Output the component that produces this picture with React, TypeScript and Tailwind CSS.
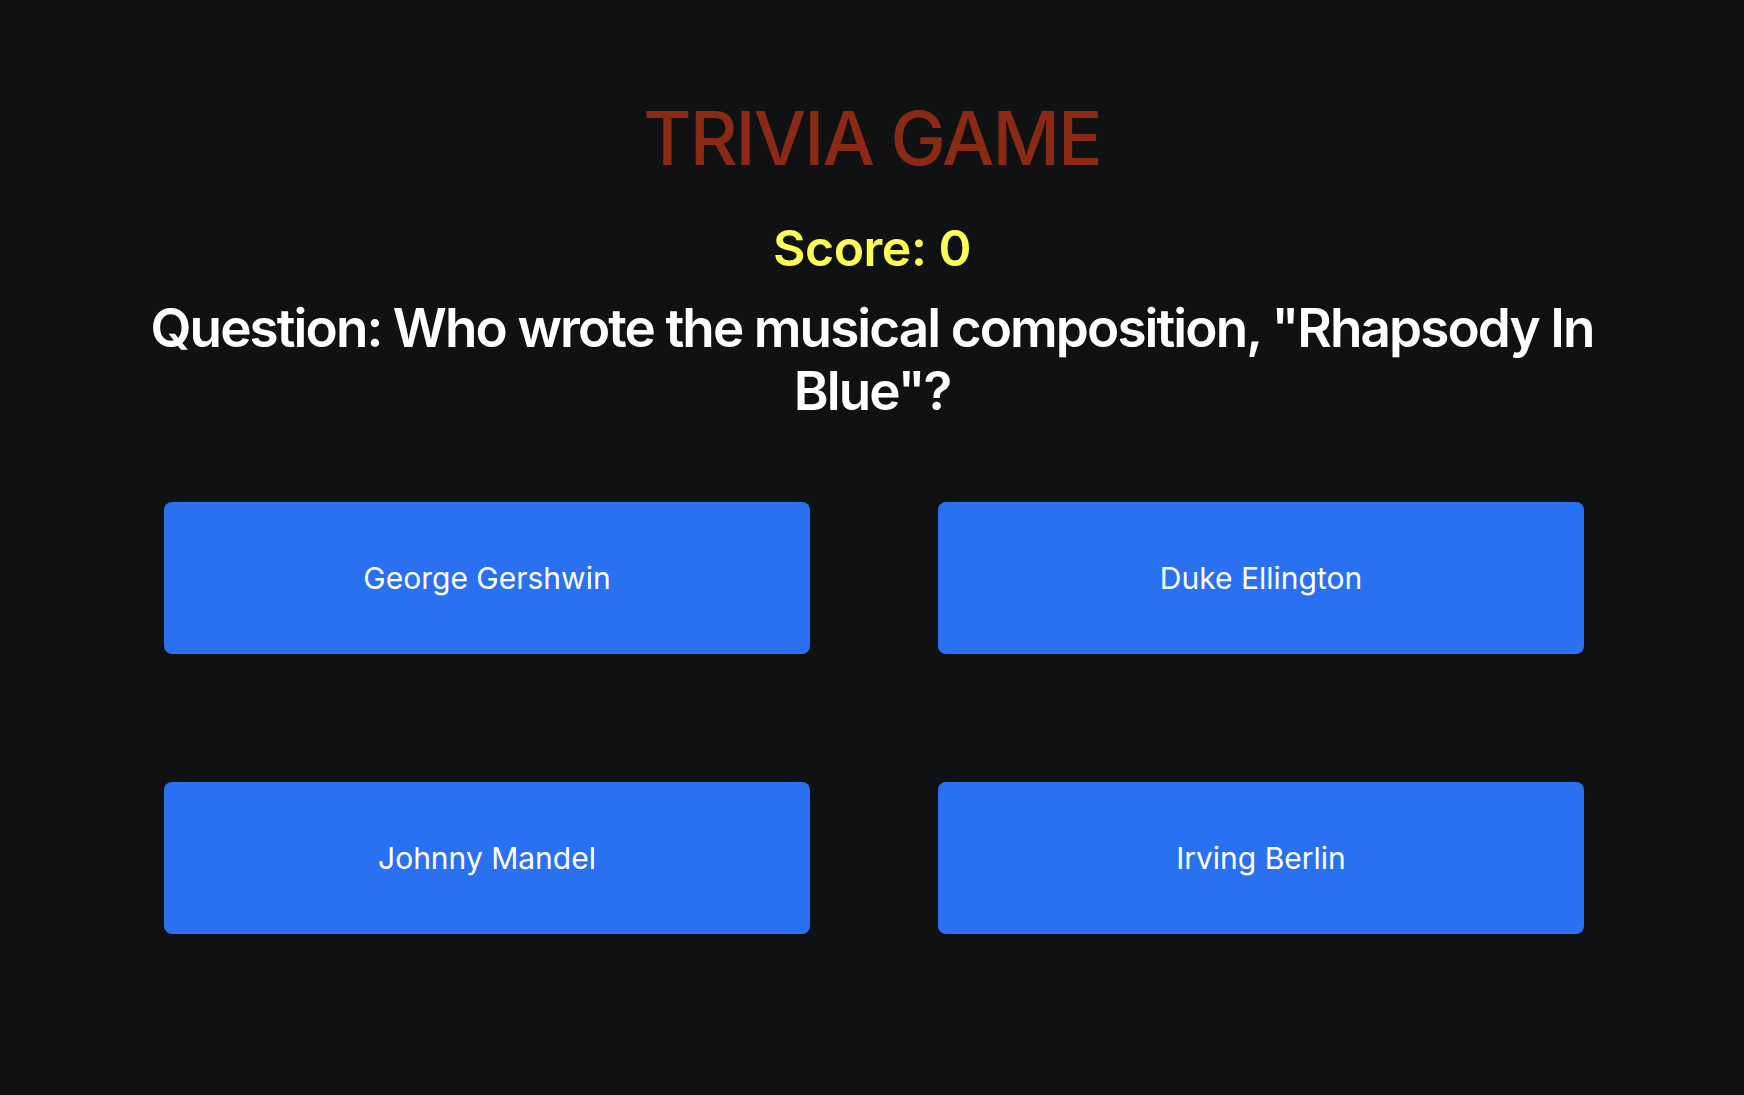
const answers = ['George Gershwin', 'Duke Ellington', 'Johnny Mandel', 'Irving Berlin']

export default function App() {
  return (
    <div className="min-h-screen bg-[#0f1113] flex flex-col items-center pt-[101px] font-['Inter',sans-serif]">
      {/* header */}
      <h1 className="text-[74px] leading-none font-medium tracking-[-0.027em] text-[#8a2914]">TRIVIA GAME</h1>
      <p className="mt-[48px] text-[50px] leading-none font-semibold tracking-[-0.01em] text-[#fdfd55]">Score: 0</p>
      <h2 className="mt-[24px] w-[1500px] text-center text-[53px] leading-[63px] font-semibold tracking-[-0.036em] text-white">
        Question: Who wrote the musical composition, "Rhapsody In Blue"?
      </h2>

      {/* answers */}
      <div className="mt-[79px] ml-[4px] grid grid-cols-2 gap-[128px] w-[1420px]">
        {answers.map((a) => (
          <button
            key={a}
            className="h-[152px] rounded-lg bg-[#2a71f2] text-white text-[30px] flex items-center justify-center"
          >
            {a}
          </button>
        ))}
      </div>
    </div>
  )
}
